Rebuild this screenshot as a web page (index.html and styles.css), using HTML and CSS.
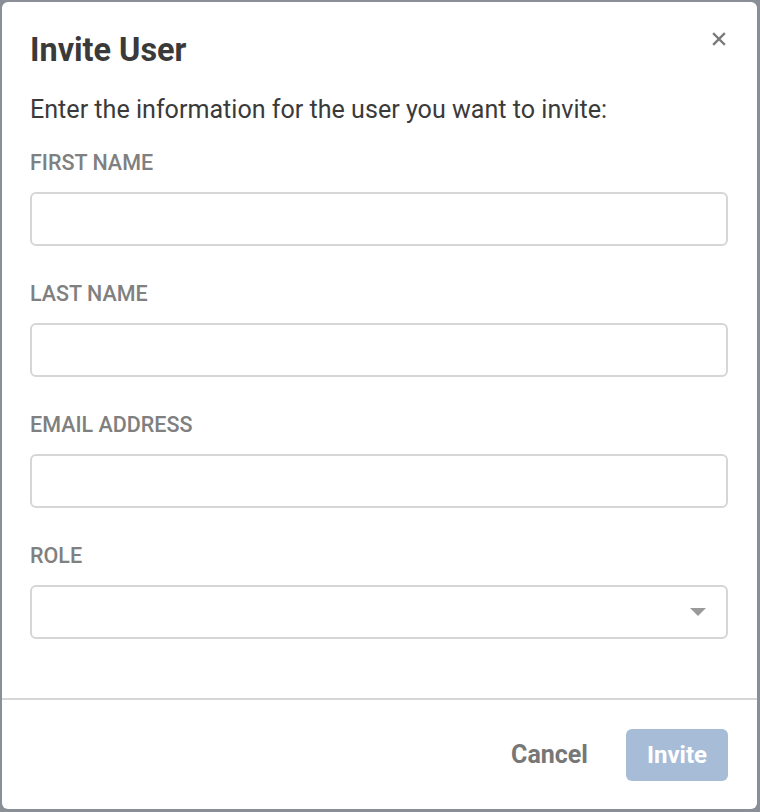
FILE: index.html
```html
<!DOCTYPE html>
<html>
<head>
<meta charset="utf-8">
<link rel="stylesheet" href="styles.css">
</head>
<body>
<div class="dialog">
  <div class="body">
    <div class="head">
      <h1 class="title">Invite User</h1>
      <button class="close" aria-label="Close">
        <svg width="14" height="14" viewBox="0 0 14 14"><path d="M2 2 L12 12 M12 2 L2 12" stroke="#7a7a7a" stroke-width="2.4" stroke-linecap="square"/></svg>
      </button>
    </div>
    <p class="intro">Enter the information for the user you want to invite:</p>
    <div class="field">
      <label class="label">FIRST NAME</label>
      <div class="input"></div>
    </div>
    <div class="field">
      <label class="label">LAST NAME</label>
      <div class="input"></div>
    </div>
    <div class="field">
      <label class="label">EMAIL ADDRESS</label>
      <div class="input"></div>
    </div>
    <div class="field">
      <label class="label">ROLE</label>
      <div class="input select"><span class="caret"></span></div>
    </div>
  </div>
  <div class="footer">
    <button class="btn cancel">Cancel</button>
    <button class="btn invite">Invite</button>
  </div>
</div>
</body>
</html>
```

FILE: styles.css
```css
* { box-sizing: border-box; }
html, body { margin: 0; padding: 0; }
body {
  background: #8a8e97;
  width: 760px;
  height: 812px;
  padding: 2px 3px 3px 2px;
  font-family: Roboto, "Liberation Sans", sans-serif;
}
.dialog {
  background: #fff;
  border-radius: 6px;
  height: 807px;
  display: flex;
  flex-direction: column;
}
.body {
  flex: 1;
  padding: 28px 28px 0 28px;
}
.head {
  display: flex;
  justify-content: space-between;
  align-items: flex-start;
}
.title {
  margin: 0;
  font-size: 32.4px;
  line-height: 40px;
  font-weight: 700;
  color: #3a3a3a;
}
.close {
  border: 0;
  background: none;
  padding: 0;
  margin-top: 2px;
  margin-right: 3px;
  width: 14px;
  height: 14px;
  display: flex;
}
.intro {
  margin: 25px 0 0 0;
  font-size: 25.1px;
  line-height: 30px;
  color: #3a3a3a;
}
.field {
  margin-top: 25px;
}
.field + .field { margin-top: 35px; }
.label {
  display: block;
  font-size: 21.5px;
  line-height: 26px;
  font-weight: 500;
  color: #808080;
}
.input {
  margin-top: 16px;
  height: 54px;
  width: 698px;
  border: 2px solid #d6d6d6;
  border-radius: 6px;
}
.select {
  display: flex;
  align-items: center;
  justify-content: flex-end;
  padding-right: 20px;
}
.caret {
  width: 0;
  height: 0;
  border-left: 8px solid transparent;
  border-right: 8px solid transparent;
  border-top: 8px solid #9a9a9a;
}
.footer {
  border-top: 2px solid #d6d6d6;
  height: 111px;
  display: flex;
  justify-content: flex-end;
  align-items: center;
  padding: 0 29px 0 0;
  gap: 38px;
}
.btn {
  border: 0;
  font-family: Roboto, "Liberation Sans", sans-serif;
  font-weight: 700;
  font-size: 25px;
  border-radius: 6px;
}
.cancel {
  background: none;
  color: #777;
  padding: 0;
}
.invite {
  background: #a7bdd7;
  color: #fff;
  width: 102px;
  height: 52px;
  font-size: 24px;
}
```
